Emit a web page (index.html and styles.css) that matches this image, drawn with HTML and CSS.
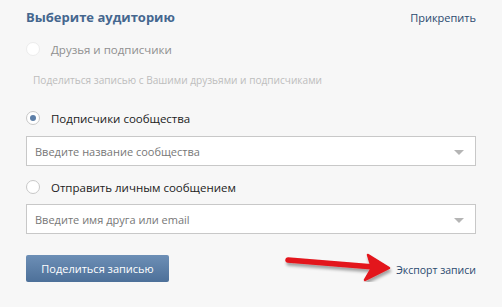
FILE: index.html
```html
<!DOCTYPE html>
<html lang="ru">
<head>
    <meta charset="UTF-8">
    <title>Выберите аудиторию</title>
    <link rel="stylesheet" href="styles.css">
</head>
<body>
    <div class="box">
        <div class="head">
            <h2 class="title">Выберите аудиторию</h2>
            <a class="link" href="#">Прикрепить</a>
        </div>

        <div class="option disabled first">
            <span class="radio"></span>
            <span class="label">Друзья и подписчики</span>
        </div>
        <div class="hint">Поделиться записью с Вашими друзьями и подписчиками</div>

        <div class="option second">
            <span class="radio checked"></span>
            <span class="label">Подписчики сообщества</span>
        </div>
        <div class="select">
            <span class="placeholder">Введите название сообщества</span>
            <span class="caret"></span>
        </div>

        <div class="option">
            <span class="radio"></span>
            <span class="label">Отправить личным сообщением</span>
        </div>
        <div class="select">
            <span class="placeholder">Введите имя друга или email</span>
            <span class="caret"></span>
        </div>

        <div class="footer">
            <button class="share-button">Поделиться записью</button>
            <a class="link export" href="#">Экспорт записи</a>
            <!-- red arrow pointing at export link -->
            <svg class="arrow" width="114" height="36" viewBox="0 0 114 36">
                <defs>
                    <filter id="shadow" x="-10%" y="-30%" width="130%" height="180%">
                        <feDropShadow dx="1" dy="3" stdDeviation="1.5" flood-color="#000" flood-opacity="0.35"/>
                    </filter>
                </defs>
                <g filter="url(#shadow)">
                    <path d="M4 11 L90 18" stroke="#e3141b" stroke-width="5.5" stroke-linecap="round"/>
                    <path d="M84 6 L105 19 L81 31 L88 19 Z" fill="#e3141b" stroke="#e3141b" stroke-width="2.5" stroke-linejoin="round"/>
                </g>
            </svg>
        </div>
    </div>
</body>
</html>
```

FILE: styles.css
```css
body {
    margin: 0;
    background-color: #f7f7f7;
    font-family: "Open Sans", Tahoma, sans-serif;
    font-size: 11px;
    color: #222;
}

.box {
    padding: 7px 26px 0 26px;
    width: 450px;
}

.head {
    display: flex;
    justify-content: space-between;
    align-items: center;
    height: 20px;
}

.title {
    margin: 0;
    font-size: 13px;
    font-weight: bold;
    color: #45678f;
}

.link {
    color: #2b4a6f;
    text-decoration: none;
    font-size: 11px;
}

.option {
    display: flex;
    align-items: center;
    height: 14px;
    margin-top: 14px;
}

.option.first {
    margin-top: 15px;
}

.option.second {
    margin-top: 24px;
}

.option.disabled .label {
    color: #8f8f8f;
}

.option.disabled .radio {
    border-color: #ececec;
}

.radio {
    width: 12px;
    height: 12px;
    border: 1px solid #c8c8c8;
    border-radius: 50%;
    background-color: #fff;
    margin-right: 11px;
    position: relative;
}

.radio.checked::after {
    content: "";
    position: absolute;
    left: 3px;
    top: 3px;
    width: 6px;
    height: 6px;
    border-radius: 50%;
    background-color: #5d7fa8;
}

.label {
    font-size: 11.5px;
    color: #222;
}

.hint {
    margin-top: 17px;
    padding-left: 7px;
    height: 14px;
    line-height: 14px;
    color: #bdbdbd;
    font-size: 10.1px;
}

.select {
    margin-top: 11px;
    height: 28px;
    border: 1px solid #c8c8c8;
    background-color: #fff;
    display: flex;
    align-items: center;
    justify-content: space-between;
    padding: 0 11px 0 8px;
}

.select + .option {
    margin-top: 14px;
}

.option + .select {
    margin-top: 10px;
}

.option.second + .select {
    margin-top: 11px;
}

.placeholder {
    color: #777;
    font-size: 11px;
}

.caret {
    width: 0;
    height: 0;
    border-left: 5px solid transparent;
    border-right: 5px solid transparent;
    border-top: 5px solid #b5b5b5;
    margin-top: 2px;
}

.footer {
    position: relative;
    display: flex;
    justify-content: space-between;
    align-items: flex-end;
    margin-top: 21px;
    height: 27px;
}

.share-button {
    width: 143px;
    height: 27px;
    border: none;
    border-radius: 2px;
    background: linear-gradient(#6d8fb6, #4d7099);
    color: #fff;
    font-family: "Open Sans", Tahoma, sans-serif;
    font-size: 11px;
    padding: 0;
}

.export {
    font-size: 10.5px;
    margin-bottom: 5px;
}

.arrow {
    position: absolute;
    left: 258px;
    top: -6px;
}
```
